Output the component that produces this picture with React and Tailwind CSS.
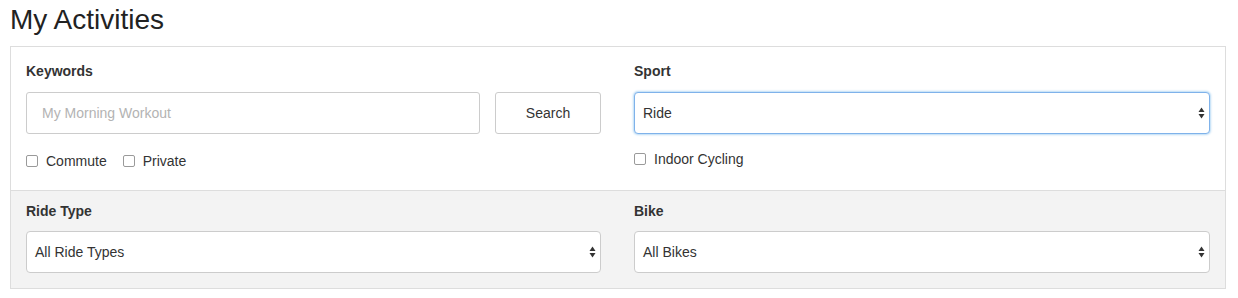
const font = { fontFamily: '"Liberation Sans", Arial, sans-serif' }

function Checkbox({ label }) {
  return (
    <label className="flex items-center gap-2 text-[14px] text-[#333]">
      <span className="block h-3 w-3 rounded-[2px] border border-[#9a9a9a] bg-white" />
      {label}
    </label>
  )
}

function Arrows() {
  return (
    <svg width="7" height="12" viewBox="0 0 7 12" className="shrink-0">
      <path d="M3.5 0.5 L6.5 5 L0.5 5 Z" fill="#333" />
      <path d="M0.5 7 L6.5 7 L3.5 11.5 Z" fill="#333" />
    </svg>
  )
}

function Select({ value, focused }) {
  return (
    <div
      className={`flex h-[42px] items-center justify-between rounded-[4px] border bg-white pl-[8px] pr-[4px] text-[14px] text-[#333] ${
        focused
          ? 'border-[#7fb2ea] shadow-[0_0_2px_1px_rgba(102,175,233,0.45)]'
          : 'border-[#cccccc]'
      }`}
    >
      <span>{value}</span>
      <Arrows />
    </div>
  )
}

function Label({ children }) {
  return <div className="h-5 text-[14px] font-bold leading-5 text-[#333]">{children}</div>
}

export default function App() {
  return (
    <div className="min-h-[298px] bg-white" style={font}>
      <h1 className="ml-[10px] h-[36px] pt-[4px] text-[28px] font-light leading-[32px] text-[#222]">
        My Activities
      </h1>

      <div className="ml-[10px] mt-[10px] w-[1216px] border border-[#dddddd]">
        {/* Keywords / Sport */}
        <div className="grid grid-cols-[575px_576px] gap-x-[33px] px-[15px] pb-[19px] pt-[14px]">
          <div>
            <Label>Keywords</Label>
            <div className="mt-[11px] flex gap-[15px]">
              <div className="flex h-[42px] flex-1 items-center rounded-[3px] border border-[#cccccc] bg-white pl-[15px] text-[14px] text-[#b3b3b3]">
                My Morning Workout
              </div>
              <div className="flex h-[42px] w-[106px] items-center justify-center rounded-[3px] border border-[#cccccc] bg-white text-[14px] text-[#333]">
                Search
              </div>
            </div>
            <div className="mt-[17px] flex h-5 items-center gap-4">
              <Checkbox label="Commute" />
              <Checkbox label="Private" />
            </div>
          </div>
          <div>
            <Label>Sport</Label>
            <div className="mt-[11px]">
              <Select value="Ride" focused />
            </div>
            <div className="mt-[15px] flex h-5 items-center">
              <Checkbox label="Indoor Cycling" />
            </div>
          </div>
        </div>

        {/* Ride Type / Bike */}
        <div className="grid grid-cols-[575px_576px] gap-x-[33px] border-t border-[#dddddd] bg-[#f3f3f3] px-[15px] pb-[15px] pt-[10px]">
          <div>
            <Label>Ride Type</Label>
            <div className="mt-[10px]">
              <Select value="All Ride Types" />
            </div>
          </div>
          <div>
            <Label>Bike</Label>
            <div className="mt-[10px]">
              <Select value="All Bikes" />
            </div>
          </div>
        </div>
      </div>
    </div>
  )
}
